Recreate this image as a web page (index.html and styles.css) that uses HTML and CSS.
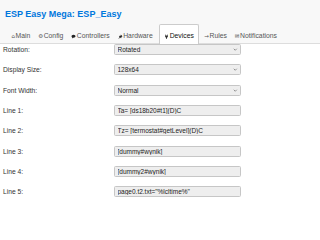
FILE: index.html
```html
<!DOCTYPE html>
<html>
<head>
<meta charset="utf-8">
<link rel="stylesheet" href="styles.css">
</head>
<body>
<header class="head">
  <h1 class="title">ESP Easy Mega: ESP_Easy</h1>
  <nav class="tabs">
    <a class="tab"><span class="ico">⌂</span>Main</a>
    <a class="tab"><span class="ico">⚙</span>Config</a>
    <a class="tab"><svg class="svgico" viewBox="0 0 10 10"><path d="M5 1.5C2.5 1.5 1 3 1 4.6c0 1 .6 1.8 1.5 2.3L2 8.8l2.2-1.3c.3 0 .5.1.8.1 2.5 0 4-1.5 4-3S7.5 1.5 5 1.5z" fill="#222"/></svg>Controllers</a>
    <a class="tab"><svg class="svgico" viewBox="0 0 10 10"><path d="M5.5 1l3.5 3.5-1 .4-1.4 1.4.2 1.6-.8.8-1.6-1.6L1.5 9.5l-.5-.5 2.4-2.9-1.6-1.6.8-.8 1.6.2L5.6 2.5z" fill="#222"/></svg>Hardware</a>
    <a class="tab active"><svg class="svgico" viewBox="0 0 10 10"><path d="M3 1.2v2H2.2v1.6c0 1.1.8 1.9 1.8 2.1V9.5h2V6.9c1-.2 1.8-1 1.8-2.1V3.2H7v-2H6v2H4v-2z" fill="#333"/></svg>Devices</a>
    <a class="tab"><span class="ico">→</span>Rules</a>
    <a class="tab"><span class="ico">✉</span>Notifications</a>
  </nav>
</header>
<main class="form">
  <div class="row"><span class="lbl">Rotation:</span><span class="sel"><select class="fld"><option>Rotated</option></select><svg class="chev" viewBox="0 0 6 4"><path d="M1 1l2 2 2-2" fill="none" stroke="#666" stroke-width="0.9"/></svg></span></div>
  <div class="row"><span class="lbl">Display Size:</span><span class="sel"><select class="fld"><option>128x64</option></select><svg class="chev" viewBox="0 0 6 4"><path d="M1 1l2 2 2-2" fill="none" stroke="#666" stroke-width="0.9"/></svg></span></div>
  <div class="row"><span class="lbl">Font Width:</span><span class="sel"><select class="fld"><option>Normal</option></select><svg class="chev" viewBox="0 0 6 4"><path d="M1 1l2 2 2-2" fill="none" stroke="#666" stroke-width="0.9"/></svg></span></div>
  <div class="row"><span class="lbl">Line 1:</span><input class="fld" type="text" value="Ta= [ds18b20#t1](D)C"></div>
  <div class="row"><span class="lbl">Line 2:</span><input class="fld" type="text" value="Tz= [termostat#getLevel](D)C"></div>
  <div class="row"><span class="lbl">Line 3:</span><input class="fld" type="text" value="[dummy#wynik]"></div>
  <div class="row"><span class="lbl">Line 4:</span><input class="fld" type="text" value="[dummy2#wynik]"></div>
  <div class="row"><span class="lbl">Line 5:</span><input class="fld" type="text" value="page0.t2.txt=&quot;%lcltime%&quot;"></div>
</main>
</body>
</html>
```
FILE: styles.css
```css
html, body {
  margin: 0;
  padding: 0;
  background: #fff;
  overflow: hidden;
}
body {
  font-family: "Liberation Sans", Arial, sans-serif;
  color: #333;
}
.head {
  box-sizing: border-box;
  height: 44px;
  background: #f8f8f8;
  border-bottom: 1px solid #ddd;
  padding-left: 5px;
  white-space: nowrap;
  overflow: visible;
}
.title {
  margin: 0;
  padding-top: 8.5px;
  font-size: 9px;
  line-height: 10px;
  font-weight: bold;
  color: #07d;
}
.tabs {
  display: flex;
  margin-top: 5.5px;
  height: 20px;
  padding-left: 2.5px;
  overflow: hidden;
}
.tab {
  display: flex;
  flex: none;
  align-items: flex-start;
  box-sizing: border-box;
  padding: 7px 3px 0;
  font-size: 6.8px;
  line-height: 8px;
  color: #555;
  border: 1px solid transparent;
  border-bottom: 0;
  border-radius: 2px 2px 0 0;
  height: 21px;
}
.tab.active {
  background: #fff;
  border-color: #ccc;
  color: #111;
  padding: 7px 4.5px 0;
  margin: 0 1px 0 2px;
}
.ico {
  font-family: "DejaVu Sans", sans-serif;
  font-size: 5.5px;
  margin-right: 0.5px;
  line-height: 8px;
}
.svgico {
  width: 5px;
  height: 5px;
  margin-top: 1.5px;
  margin-right: 0.5px;
}
.form {
  display: flex;
  flex-direction: column;
  gap: 9.35px;
  padding-left: 3px;
}
.row {
  display: grid;
  grid-template-columns: 111px 127px;
  align-items: center;
  height: 11px;
}
.lbl {
  font-size: 6.7px;
  color: #333;
}
.fld {
  box-sizing: border-box;
  width: 127px;
  height: 11px;
  margin: 0;
  padding: 0 2.5px;
  font-family: "Liberation Sans", Arial, sans-serif;
  font-size: 6.5px;
  color: #222;
  background: #eee;
  border: 1px solid #c6c6c6;
  border-radius: 1.5px;
  outline: none;
}
.sel {
  display: grid;
  align-items: center;
  justify-items: end;
  width: 127px;
  height: 11px;
}
.sel > * {
  grid-area: 1 / 1;
}
select.fld {
  appearance: none;
  -webkit-appearance: none;
  padding: 0 2.5px;
  justify-self: stretch;
}
.chev {
  width: 4.5px;
  height: 3px;
  margin-right: 3.5px;
}
```
